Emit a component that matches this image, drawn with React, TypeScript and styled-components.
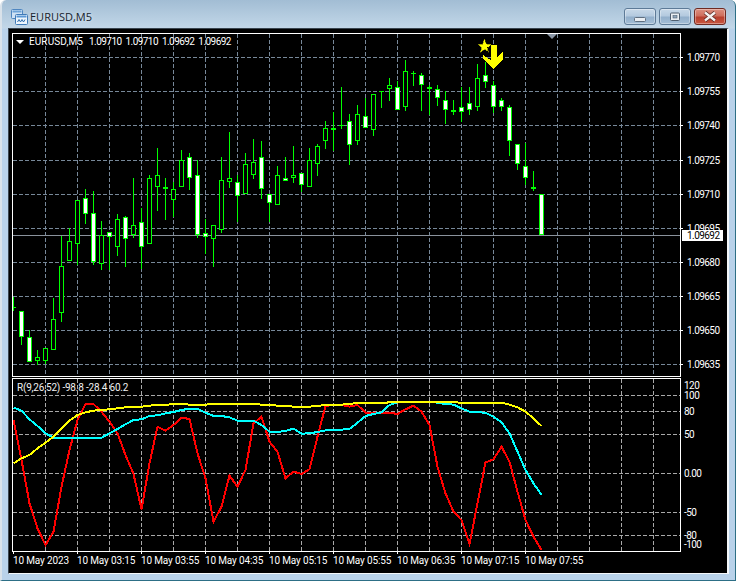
import React from 'react';
import styled, { createGlobalStyle } from 'styled-components';

// [wick top, body top, body bottom, wick bottom, filled white]
type Candle = [number, number, number, number, boolean];

const candles: Candle[] = [
  [297, 307, 308, 311, false], [311, 311, 337, 345, true], [330, 337, 362, 362, true], [350, 357, 361, 365, false],
  [348, 348, 361, 364, false], [298, 319, 350, 350, false], [236, 266, 313, 322, false], [228, 241, 261, 261, false],
  [200, 200, 244, 265, false], [189, 198, 214, 224, true], [191, 213, 262, 265, true], [221, 235, 264, 270, false],
  [232, 232, 237, 270, true], [214, 219, 247, 256, false], [216, 217, 239, 267, true], [178, 225, 235, 238, false],
  [208, 222, 247, 269, true], [175, 178, 244, 244, false], [148, 175, 187, 211, false], [178, 187, 189, 220, true],
  [182, 189, 200, 217, false], [150, 160, 187, 187, false], [153, 157, 178, 190, true], [160, 175, 235, 238, true],
  [219, 233, 237, 254, true], [225, 225, 239, 267, false], [157, 180, 230, 233, false], [132, 178, 182, 188, false],
  [175, 182, 196, 222, true], [153, 164, 194, 194, false], [139, 162, 175, 179, false], [141, 157, 189, 199, true],
  [194, 194, 203, 222, true], [166, 175, 205, 205, false], [157, 178, 181, 181, true], [146, 175, 178, 183, false],
  [173, 173, 185, 192, true], [148, 160, 187, 187, false], [144, 146, 164, 176, false], [121, 128, 141, 149, false],
  [112, 128, 130, 151, true], [87, 125, 126, 129, false], [114, 121, 145, 165, true], [105, 114, 141, 145, false],
  [98, 116, 128, 128, true], [94, 94, 130, 136, false], [91, 91, 92, 108, false], [78, 85, 89, 101, false],
  [81, 87, 110, 110, true], [60, 71, 107, 111, false], [71, 73, 74, 86, false], [73, 75, 85, 111, true],
  [85, 87, 89, 115, true], [85, 89, 98, 106, true], [91, 100, 110, 124, true], [100, 110, 112, 115, true],
  [87, 107, 112, 122, true], [87, 103, 110, 115, true], [64, 78, 107, 111, false], [62, 75, 82, 88, true],
  [81, 85, 107, 113, true], [98, 100, 107, 111, true], [105, 107, 141, 156, true], [144, 144, 164, 170, true],
  [143, 166, 178, 185, true], [171, 187, 189, 191, true], [194, 194, 235, 235, true],
];

// indicator lines, one value per bar, traced from the reference at 3x (see toY)
const redLine = [
  150, 270, 400, 475, 525, 485, 350, 240, 150, 102, 102, 125, 155, 190, 255, 312, 418, 280, 170, 182, 165, 143, 147,
  250, 325, 455, 410, 317, 350, 300, 160, 140, 215, 245, 325, 305, 312, 298, 200, 108, 105, 105, 110, 105, 128, 128,
  128, 128, 132, 118, 107, 125, 165, 290, 370, 425, 450, 522, 400, 277, 268, 230, 275, 365, 450, 500, 540,
];
const cyanLine = [
  113, 122, 148, 168, 190, 203, 203, 203, 203, 203, 203, 203, 190, 177, 163, 150, 148, 138, 136, 130, 126, 120, 116,
  116, 128, 138, 138, 142, 152, 152, 152, 165, 185, 186, 183, 176, 191, 190, 186, 181, 180, 179, 177, 158, 138, 132,
  127, 105, 97, 96, 96, 96, 96, 98, 102, 104, 115, 125, 127, 128, 140, 157, 190, 245, 300, 340, 375,
];
const yellowLine = [
  280, 265, 255, 235, 218, 200, 175, 152, 135, 127, 122, 120, 118, 115, 112, 110, 110, 107, 105, 104, 103, 102, 104,
  104, 104, 102, 102, 102, 102, 102, 102, 104, 105, 107, 107, 110, 110, 110, 107, 106, 105, 104, 101, 100, 99, 99,
  99, 97, 96, 96, 96, 96, 96, 96, 96, 97, 98, 98, 98, 98, 98, 98, 104, 112, 125, 145, 168,
];

const barX = (i: number) => 13 + 8 * i;
const toY = (v: number) => 370 + v / 3;
const linePoints = (values: number[]) => values.map((v, i) => `${barX(i) + 0.5},${toY(v)}`).join(' ');

const gridXs = Array.from({ length: 20 }, (_, i) => 45 + 32 * i);

const priceTicks: [string, number][] = [
  ['1.09770', 57], ['1.09755', 91], ['1.09740', 125], ['1.09725', 160], ['1.09710', 194],
  ['1.09695', 228], ['1.09680', 262], ['1.09665', 296], ['1.09650', 330], ['1.09635', 364],
];
const indicatorGrid = [395, 411, 434, 473, 512, 535];
const indicatorTicks: [string, number][] = [
  ['120', 385], ['100', 395], ['80', 411], ['50', 434], ['0.00', 473], ['-50', 512], ['-80', 535], ['-100', 544],
];
const timeLabels = ['10 May 2023', '10 May 03:15', '10 May 03:55', '10 May 04:35', '10 May 05:15', '10 May 05:55', '10 May 06:35', '10 May 07:15', '10 May 07:55'];

const GlobalStyle = createGlobalStyle`
  html, body {
    margin: 0;
    background: #fff;
  }
`;

const Window = styled.div`
  box-sizing: border-box;
  width: 736px;
  height: 581px;
  padding: 0 6px 6px 6px;
  border-left: 2px solid #d9e2ea;
  border-right: 1px solid #2d6f86;
  border-bottom: 1px solid #2d6f86;
  border-radius: 6px 6px 0 0;
  background: linear-gradient(180deg, #a2bdd4 0, #c2d7e8 28px, #b9d2ea 29px);
`;

const TitleBar = styled.div`
  display: flex;
  align-items: center;
  height: 28px;
  padding: 5px 0 0 3px;
  box-sizing: border-box;
`;

const TitleText = styled.span`
  margin-left: 2px;
  flex: 1;
  font: 11px 'Open Sans', sans-serif;
  color: #16222c;
  text-shadow: 0 0 4px rgba(255, 255, 255, 0.7);
`;

const WinButtons = styled.div`
  display: flex;
  gap: 3px;
  margin-right: 3px;
`;

const WinButton = styled.div<{ $close?: boolean }>`
  box-sizing: border-box;
  width: 32px;
  height: 17px;
  display: flex;
  align-items: center;
  justify-content: center;
  border: 1px solid ${(p) => (p.$close ? '#6e2a22' : '#5d7a97')};
  border-radius: 3px;
  box-shadow: inset 0 0 0 1px rgba(255, 255, 255, 0.35);
  background: ${(p) =>
    p.$close
      ? 'linear-gradient(180deg, #dc9080 0, #cf6f5d 45%, #b8402f 55%, #c9573f 100%)'
      : 'linear-gradient(180deg, #c8d9e9 0, #b4cadf 45%, #93b0cc 55%, #a4bed6 100%)'};
`;

const ChartFrame = styled.div`
  box-sizing: border-box;
  width: 721px;
  height: 546px;
  padding: 4px 0 0 3px;
  background: #000;
  border-top: 1px solid #39454f;
  border-left: 1px solid #39454f;
  border-right: 2px solid #f4f7fa;
  border-bottom: 1px solid #f4f7fa;
`;

const PaneRow = styled.div<{ $gap?: number }>`
  display: flex;
  margin-top: ${(p) => p.$gap ?? 0}px;
`;

const Plot = styled.div<{ $height: number }>`
  position: relative;
  box-sizing: border-box;
  width: 669px;
  height: ${(p) => p.$height}px;
  border: 1px solid #fff;
  overflow: hidden;

  svg {
    display: block;
  }
`;

const Axis = styled.div`
  position: relative;
  flex: 1;
`;

const AxisLabel = styled.span<{ $left: number }>`
  position: absolute;
  left: ${(p) => p.$left}px;
  transform: translateY(-50%);
  font: 10px Roboto, sans-serif;
  letter-spacing: -0.55px;
  line-height: 9px;
  color: #fff;
  white-space: nowrap;
`;

const AxisTick = styled.i`
  position: absolute;
  left: 0;
  width: 2px;
  height: 1px;
  background: #fff;
`;

const BidBox = styled.span`
  position: absolute;
  left: 1px;
  top: 197px;
  box-sizing: border-box;
  width: 41px;
  height: 11px;
  padding-left: 5px;
  background: #fff;
  color: #000;
  font: 10px Roboto, sans-serif;
  letter-spacing: -0.55px;
  line-height: 11px;
`;

const Legend = styled.div`
  position: absolute;
  display: flex;
  align-items: center;
  color: #fff;
  font: 10px Roboto, sans-serif;
  line-height: 12px;
  white-space: pre;
`;

const SymbolLegend = styled(Legend)`
  left: 3px;
  top: 2px;
`;

const IndicatorLegend = styled(Legend)`
  left: 4px;
  top: 3px;
  letter-spacing: -0.2px;
  color: #f0f0f0;
`;

const LegendSymbol = styled.span`
  letter-spacing: 0.1px;
`;

const LegendPrices = styled.span`
  margin-left: 6px;
  letter-spacing: -0.55px;
  word-spacing: 2px;
`;

const DownCaret = styled.i`
  width: 0;
  height: 0;
  margin-right: 5px;
  border-left: 4px solid transparent;
  border-right: 4px solid transparent;
  border-top: 4px solid #fff;
`;

const ShiftMark = styled.i`
  position: absolute;
  left: 534px;
  top: 0;
  width: 0;
  height: 0;
  border-left: 5px solid transparent;
  border-right: 5px solid transparent;
  border-top: 5px solid #8b97a6;
`;

const TimeAxis = styled.div`
  display: flex;
  height: 21px;
  padding-left: 1px;
`;

const TimeLabel = styled.span`
  position: relative;
  flex: 0 0 64px;
  padding-top: 3px;
  font: 10px Roboto, sans-serif;
  letter-spacing: -0.15px;
  line-height: 12px;
  color: #fff;
  white-space: nowrap;

  &::before {
    content: '';
    position: absolute;
    left: 0;
    top: 0;
    width: 1px;
    height: 2px;
    background: #fff;
  }
`;

const ChartIcon = () => (
  <svg width="17" height="16" viewBox="0 0 17 16">
    <rect x="0.5" y="0.5" width="11" height="9" rx="1" fill="#cfe2f5" stroke="#4f86c0" />
    <rect x="1.5" y="1.5" width="9" height="2" fill="#6ea3d8" />
    <rect x="4.5" y="5.5" width="12" height="10" rx="1" fill="#eef6fd" stroke="#3f7ab8" />
    <rect x="5.5" y="6.5" width="10" height="2" fill="#5b98d6" />
    <path d="M6.5 13 L8 10.5 L9.5 13 L11 10.5 L12.5 13 L14 10.5" fill="none" stroke="#2f6eae" />
  </svg>
);

const MinGlyph = () => (
  <svg width="14" height="10" viewBox="0 0 14 10">
    <rect x="1.5" y="5.5" width="11" height="4" rx="1" fill="#e9eef3" stroke="#5f6f80" />
  </svg>
);

const MaxGlyph = () => (
  <svg width="12" height="10" viewBox="0 0 12 10">
    <rect x="1.5" y="1" width="9" height="7.5" rx="1" fill="#e9eef3" stroke="#4f5f70" />
    <rect x="4" y="3.5" width="4" height="2.5" fill="#8fa6bc" stroke="#4f5f70" strokeWidth="0.6" />
  </svg>
);

const CloseGlyph = () => (
  <svg width="16" height="11" viewBox="0 0 16 11">
    <path d="M3 1.5 L13 9.5 M13 1.5 L3 9.5" stroke="#5c2a24" strokeWidth="4" />
    <path d="M3 1.5 L13 9.5 M13 1.5 L3 9.5" stroke="#f5f2f0" strokeWidth="2.4" />
  </svg>
);

const GridLines = ({ rows, top, bottom, color }: { rows: number[]; top: number; bottom: number; color: string }) => (
  <g stroke={color} strokeDasharray="4 2">
    {rows.map((y) => (
      <line key={y} x1={13} x2={680} y1={y + 0.5} y2={y + 0.5} />
    ))}
    {gridXs.map((x) => (
      <line key={x} x1={x + 0.5} x2={x + 0.5} y1={top} y2={bottom} />
    ))}
  </g>
);

const Bar = ({ index, data }: { index: number; data: Candle }) => {
  const [wickTop, bodyTop, bodyBottom, wickBottom, white] = data;
  const x = barX(index);
  const h = Math.max(bodyBottom - bodyTop, 1);
  return (
    <g>
      <rect x={x} y={wickTop} width={1} height={wickBottom - wickTop} fill="#00ff00" />
      <rect x={x - 2} y={bodyTop} width={5} height={h} fill="#00ff00" />
      {h > 2 && <rect x={x - 1} y={bodyTop + 1} width={3} height={h - 2} fill={white ? '#fff' : '#000'} />}
    </g>
  );
};

const PriceChart = () => (
  <svg width="667" height="342" viewBox="13 34 667 342" shapeRendering="crispEdges">
    <GridLines rows={priceTicks.map(([, y]) => y)} top={34} bottom={376} color="#778899" />
    <line x1={13} x2={680} y1={235.5} y2={235.5} stroke="#8a929c" />
    {candles.map((c, i) => (
      <Bar key={i} index={i} data={c} />
    ))}
    <polygon points="490.5,45 497,45 497,57 503,52 503,59 493.5,68.5 483,59 483,55 490.5,60" fill="#ffff00" />
    <polygon
      points="484.5,39 486.5,44 491,44.5 487.5,47.5 489,52.5 484.5,49.5 480,52.5 481.5,47.5 478,44.5 482.5,44"
      fill="#ffff00"
      stroke="#5c5c00"
      strokeWidth="0.5"
    />
  </svg>
);

const IndicatorChart = () => (
  <svg width="667" height="172" viewBox="13 379 667 172" shapeRendering="crispEdges">
    <GridLines rows={indicatorGrid} top={379} bottom={551} color="#a9a9a9" />
    <polyline points={linePoints(redLine)} fill="none" stroke="#ff0000" strokeWidth="2" />
    <polyline points={linePoints(cyanLine)} fill="none" stroke="#00ffff" strokeWidth="2" />
    <polyline points={linePoints(yellowLine)} fill="none" stroke="#ffff00" strokeWidth="2" />
  </svg>
);

export default function App() {
  return (
    <>
      <GlobalStyle />
      <Window>
        <TitleBar>
          <ChartIcon />
          <TitleText>EURUSD,M5</TitleText>
          <WinButtons>
            <WinButton><MinGlyph /></WinButton>
            <WinButton><MaxGlyph /></WinButton>
            <WinButton $close><CloseGlyph /></WinButton>
          </WinButtons>
        </TitleBar>
        <ChartFrame>
          <PaneRow>
            <Plot $height={344}>
              <PriceChart />
              <SymbolLegend>
                <DownCaret />
                <LegendSymbol>EURUSD,M5</LegendSymbol>
                <LegendPrices>1.09710 1.09710 1.09692 1.09692</LegendPrices>
              </SymbolLegend>
              <ShiftMark />
            </Plot>
            <Axis>
              {priceTicks.map(([label, y]) => (
                <React.Fragment key={label}>
                  <AxisTick style={{ top: y - 33 }} />
                  <AxisLabel $left={6} style={{ top: y - 33 }}>{label}</AxisLabel>
                </React.Fragment>
              ))}
              <BidBox>1.09692</BidBox>
            </Axis>
          </PaneRow>
          <PaneRow $gap={1}>
            <Plot $height={174}>
              <IndicatorChart />
              <IndicatorLegend>R(9,26,52) -98.8 -28.4 60.2</IndicatorLegend>
            </Plot>
            <Axis>
              {indicatorTicks.map(([label, y]) => (
                <AxisLabel key={label} $left={3} style={{ top: y - 378 }}>{label}</AxisLabel>
              ))}
            </Axis>
          </PaneRow>
          <TimeAxis>
            {timeLabels.map((t) => (
              <TimeLabel key={t}>{t}</TimeLabel>
            ))}
          </TimeAxis>
        </ChartFrame>
      </Window>
    </>
  );
}
